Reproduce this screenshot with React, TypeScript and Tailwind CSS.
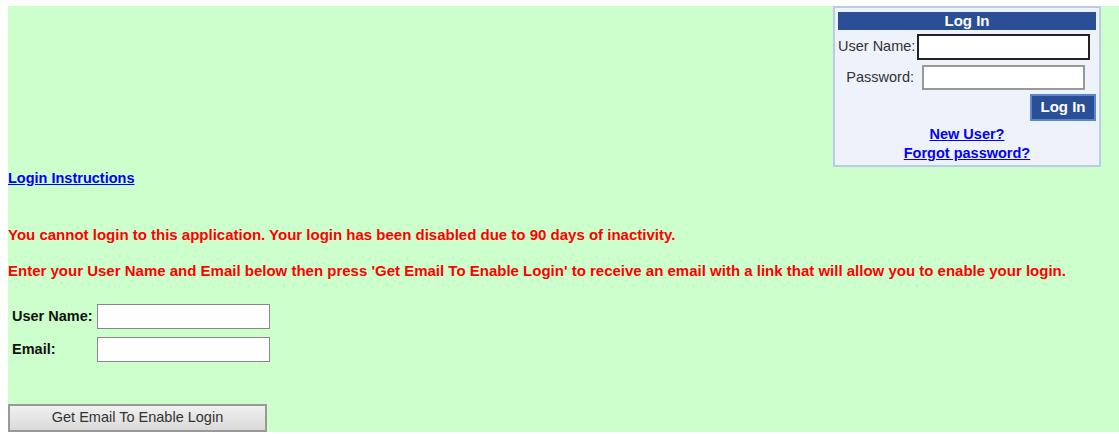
export default function App() {
  return (
    <div className="min-h-screen bg-white pl-2 pt-[6px]" style={{ fontFamily: '"Liberation Sans", Arial, sans-serif' }}>
      <div className="w-[1111px] bg-[#ccffcc]">
        {/* top strip with the login panel on the right */}
        <div className="flex justify-end pr-[18px]">
          <div className="w-[268px] border-2 border-[#bccbe4] bg-[#eef2fb] px-[3px] pt-[4px] pb-[2px]">
            <div className="h-[18px] bg-[#2a4f97] text-center text-[15px] leading-[18px] font-bold text-white">Log In</div>
            <div className="mt-[4px] flex items-center">
              <span className="text-[14.5px] text-[#333]">User Name:</span>
              <input className="ml-[2px] h-[26px] w-[173px] border-2 border-[#222] bg-white" />
            </div>
            <div className="mt-[5px] flex items-center justify-end pr-[11px]">
              <span className="text-[14.5px] text-[#333]">Password:</span>
              <input className="ml-[8px] h-[25px] w-[163px] border-2 border-[#999] bg-white" />
            </div>
            <div className="mt-[4px] flex justify-end">
              <button className="h-[27px] w-[66px] border-2 border-[#5a86d0] bg-[#2a4f97] text-[15px] font-bold text-white">Log In</button>
            </div>
            <div className="mt-[4px] text-center text-[14.5px] leading-[19px] font-bold">
              <a href="#" className="text-[#0000ff] underline">New User?</a>
              <br />
              <a href="#" className="text-[#0000ff] underline">Forgot password?</a>
            </div>
          </div>
        </div>

        <div className="pt-[1px] leading-[20px]">
          <a href="#" className="text-[14.5px] font-bold text-[#0000ff] underline">Login Instructions</a>
        </div>

        <p className="mt-[38px] text-[15px] leading-[18px] font-bold text-[#ff0000]">
          You cannot login to this application. Your login has been disabled due to 90 days of inactivity.
        </p>
        <p className="mt-[18px] text-[15px] leading-[18px] font-bold text-[#ff0000]">
          Enter your User Name and Email below then press 'Get Email To Enable Login' to receive an email with a link that will allow you to enable your login.
        </p>

        <div className="mt-[24px] flex flex-col gap-[8px] pl-[4px]">
          <div className="flex items-center">
            <span className="w-[85px] text-[14.5px] font-bold text-[#111]">User Name:</span>
            <input className="h-[25px] w-[173px] border border-[#888] bg-white" />
          </div>
          <div className="flex items-center">
            <span className="w-[85px] text-[14.5px] font-bold text-[#111]">Email:</span>
            <input className="h-[25px] w-[173px] border border-[#888] bg-white" />
          </div>
        </div>

        <div className="mt-[42px]">
          <button className="h-[28px] w-[259px] border-2 border-[#999] bg-gradient-to-b from-[#f0f0f0] to-[#dadada] text-[14.5px] text-[#333]">
            Get Email To Enable Login
          </button>
        </div>
      </div>
    </div>
  );
}
